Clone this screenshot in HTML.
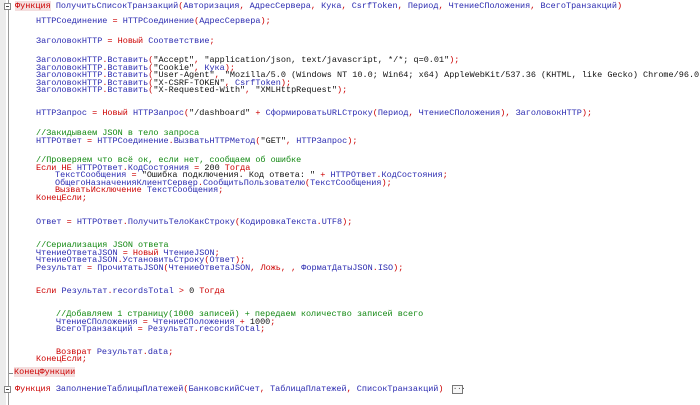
<!DOCTYPE html>
<html><head><meta charset="utf-8"><style>
body{margin:0;width:700px;height:405px;background:#fff;overflow:hidden;position:relative;font-family:"Liberation Mono","DejaVu Sans Mono",monospace;font-size:8.5px;}
.gut{position:absolute;left:0;top:0;width:6px;height:405px;background:#ececec;}
.vl{position:absolute;left:8px;top:0;width:1px;height:405px;background:#9a9a9a;}
.l{position:absolute;white-space:pre;line-height:8px;color:#c00;}
.b{color:#2a2ab0}.k{color:#111}.g{color:#118811}.r{color:#c00}
.hl{background:#f4dede}
.fold{position:absolute;left:4px;width:7px;height:7px;border:1px solid #888;background:#fff;box-sizing:border-box;}
.fold:after{content:"";position:absolute;left:1px;top:2px;width:3px;height:1px;background:#444}
.tick{position:absolute;left:9px;width:4px;height:1px;background:#888}
.dots{position:absolute;left:452px;top:385px;width:11px;height:9px;border:1px solid #777;box-sizing:border-box;font-size:7px;line-height:4px;text-align:center;color:#333;background:#f6f6f6}
</style></head><body>
<div class="gut"></div><div class="vl"></div>
<div class="fold" style="top:3px"></div>
<div class="tick" style="top:373px"></div>
<div class="fold" style="top:386px"></div>
<div class="dots">...</div>

<div class="l" style="left:15px;top:2px"><span class="hl">Функция</span> <span class="b">ПолучитьСписокТранзакций</span>(<span class="b">Авторизация</span>, <span class="b">АдресСервера</span>, <span class="b">Кука</span>, <span class="b">CsrfToken</span>, <span class="b">Период</span>, <span class="b">ЧтениеСПоложения</span>, <span class="b">ВсегоТранзакций</span>)</div>
<div class="l" style="left:36px;top:17px"><span class="b">HTTPСоединение</span> = <span class="b">HTTPСоединение</span>(<span class="b">АдресСервера</span>);</div>
<div class="l" style="left:36px;top:37px"><span class="b">ЗаголовокHTTP</span> = Новый <span class="b">Соответствие</span>;</div>
<div class="l" style="left:36px;top:56px"><span class="b">ЗаголовокHTTP</span>.<span class="b">Вставить</span>(<span class="k">"Accept"</span>, <span class="k">"application/json, text/javascript, */*; q=0.01"</span>);</div>
<div class="l" style="left:36px;top:64px"><span class="b">ЗаголовокHTTP</span>.<span class="b">Вставить</span>(<span class="k">"Cookie"</span>, <span class="b">Кука</span>);</div>
<div class="l" style="left:36px;top:71px"><span class="b">ЗаголовокHTTP</span>.<span class="b">Вставить</span>(<span class="k">"User-Agent"</span>, <span class="k">"Mozilla/5.0 (Windows NT 10.0; Win64; x64) AppleWebKit/537.36 (KHTML, like Gecko) Chrome/96.0</span></div>
<div class="l" style="left:36px;top:79px"><span class="b">ЗаголовокHTTP</span>.<span class="b">Вставить</span>(<span class="k">"X-CSRF-TOKEN"</span>, <span class="b">CsrfToken</span>);</div>
<div class="l" style="left:36px;top:86px"><span class="b">ЗаголовокHTTP</span>.<span class="b">Вставить</span>(<span class="k">"X-Requested-With"</span>, <span class="k">"XMLHttpRequest"</span>);</div>
<div class="l" style="left:36px;top:109px"><span class="b">HTTPЗапрос</span> = Новый <span class="b">HTTPЗапрос</span>(<span class="k">"/dashboard"</span> + <span class="b">СформироватьURLСтроку</span>(<span class="b">Период</span>, <span class="b">ЧтениеСПоложения</span>), <span class="b">ЗаголовокHTTP</span>);</div>
<div class="l g" style="left:36px;top:129px">//Закидываем JSON в тело запроса</div>
<div class="l" style="left:36px;top:137px"><span class="b">HTTPОтвет</span> = <span class="b">HTTPСоединение</span>.<span class="b">ВызватьHTTPМетод</span>(<span class="k">"GET"</span>, <span class="b">HTTPЗапрос</span>);</div>
<div class="l g" style="left:36px;top:156px">//Проверяем что всё ок, если нет, сообщаем об ошибке</div>
<div class="l" style="left:36px;top:164px">Если НЕ <span class="b">HTTPОтвет</span>.<span class="b">КодСостояния</span> = <span class="k">200</span> Тогда</div>
<div class="l" style="left:55px;top:171px"><span class="b">ТекстСообщения</span> = <span class="k">"Ошибка подключения. Код ответа: "</span> + <span class="b">HTTPОтвет</span>.<span class="b">КодСостояния</span>;</div>
<div class="l" style="left:55px;top:179px"><span class="b">ОбщегоНазначенияКлиентСервер</span>.<span class="b">СообщитьПользователю</span>(<span class="b">ТекстСообщения</span>);</div>
<div class="l" style="left:55px;top:186px">ВызватьИсключение <span class="b">ТекстСообщения</span>;</div>
<div class="l" style="left:36px;top:194px">КонецЕсли;</div>
<div class="l" style="left:36px;top:218px"><span class="b">Ответ</span> = <span class="b">HTTPОтвет</span>.<span class="b">ПолучитьТелоКакСтроку</span>(<span class="b">КодировкаТекста</span>.<span class="b">UTF8</span>);</div>
<div class="l g" style="left:36px;top:241px">//Сериализация JSON ответа</div>
<div class="l" style="left:36px;top:249px"><span class="b">ЧтениеОтветаJSON</span> = Новый <span class="b">ЧтениеJSON</span>;</div>
<div class="l" style="left:36px;top:256px"><span class="b">ЧтениеОтветаJSON</span>.<span class="b">УстановитьСтроку</span>(<span class="b">Ответ</span>);</div>
<div class="l" style="left:36px;top:264px"><span class="b">Результат</span> = <span class="b">ПрочитатьJSON</span>(<span class="b">ЧтениеОтветаJSON</span>, Ложь, , <span class="b">ФорматДатыJSON</span>.<span class="b">ISO</span>);</div>
<div class="l" style="left:36px;top:287px">Если <span class="b">Результат</span>.<span class="b">recordsTotal</span> &gt; <span class="k">0</span> Тогда</div>
<div class="l g" style="left:56px;top:310px">//Добавляем 1 страницу(1000 записей) + передаем количество записей всего</div>
<div class="l" style="left:56px;top:318px"><span class="b">ЧтениеСПоложения</span> = <span class="b">ЧтениеСПоложения</span> + <span class="k">1000</span>;</div>
<div class="l" style="left:56px;top:325px"><span class="b">ВсегоТранзакций</span> = <span class="b">Результат</span>.<span class="b">recordsTotal</span>;</div>
<div class="l" style="left:56px;top:348px">Возврат <span class="b">Результат</span>.<span class="b">data</span>;</div>
<div class="l" style="left:36px;top:355px">КонецЕсли;</div>
<div class="l" style="left:14px;top:368px"><span class="hl">КонецФункции</span></div>
<div class="l" style="left:15px;top:385px">Функция <span class="b">ЗаполнениеТаблицыПлатежей</span>(<span class="b">БанковскийСчет</span>, <span class="b">ТаблицаПлатежей</span>, <span class="b">СписокТранзакций</span>)</div>
</body></html>
